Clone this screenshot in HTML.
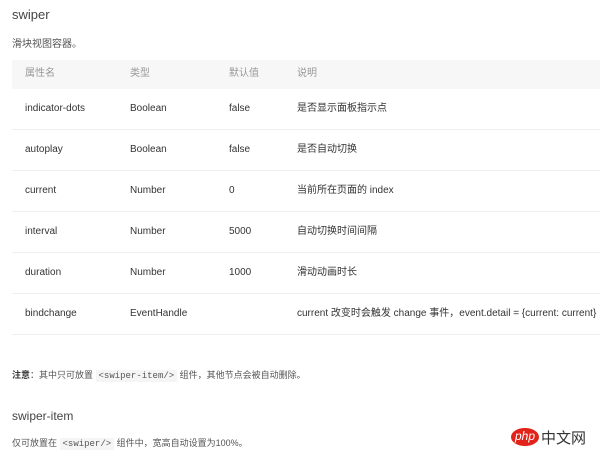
<!DOCTYPE html><html><head><meta charset="utf-8"><style>
body{margin:0;width:600px;height:457px;background:#fff;font-family:"Liberation Sans","Noto Sans CJK SC",sans-serif;color:#333;position:relative;overflow:hidden}
.a{position:absolute;white-space:nowrap}
table{position:absolute;left:12px;top:60px;width:588px;border-collapse:collapse;font-size:10px;line-height:14px}
td,th{padding:0 0 0 13px;text-align:left;font-weight:normal;height:40px;border-bottom:1px solid #eee;vertical-align:middle;white-space:nowrap}
th{background:#f7f7f7;height:28px;color:#999;border-bottom:1px solid #f7f7f7}
code{font-family:"Liberation Mono",monospace;font-size:9px;background:#f5f5f5;padding:1px 3px;color:#555}
</style></head><body>
<div class="a" style="left:12px;top:7px;font-size:13px;color:#444">swiper</div>
<div class="a" style="left:12px;top:35px;font-size:10px;color:#555">滑块视图容器。</div>
<table>
<tr><th style="width:92px">属性名</th><th style="width:86px">类型</th><th style="width:55px">默认值</th><th>说明</th></tr>
<tr><td>indicator-dots</td><td>Boolean</td><td>false</td><td>是否显示面板指示点</td></tr>
<tr><td>autoplay</td><td>Boolean</td><td>false</td><td>是否自动切换</td></tr>
<tr><td>current</td><td>Number</td><td>0</td><td>当前所在页面的 index</td></tr>
<tr><td>interval</td><td>Number</td><td>5000</td><td>自动切换时间间隔</td></tr>
<tr><td>duration</td><td>Number</td><td>1000</td><td>滑动动画时长</td></tr>
<tr><td>bindchange</td><td>EventHandle</td><td></td><td>current 改变时会触发 change 事件，event.detail = {current: current}</td></tr>
</table>
<div class="a" style="left:12px;top:368px;font-size:9px;color:#555"><b style="color:#333">注意</b>：其中只可放置 <code>&lt;swiper-item/&gt;</code> 组件，其他节点会被自动删除。</div>
<div class="a" style="left:12px;top:409px;font-size:12px;color:#444">swiper-item</div>
<div class="a" style="left:12px;top:436px;font-size:9px;color:#555">仅可放置在 <code>&lt;swiper/&gt;</code> 组件中，宽高自动设置为100%。</div>
<div class="a" style="left:511px;top:428px;width:28px;height:18px;border-radius:50%;background:#e2231a;color:#fff;font-size:12px;font-style:italic;text-align:center;line-height:17px">php</div>
<div class="a" style="left:541px;top:427px;font-size:15px;color:#333">中文网</div>
</body></html>
